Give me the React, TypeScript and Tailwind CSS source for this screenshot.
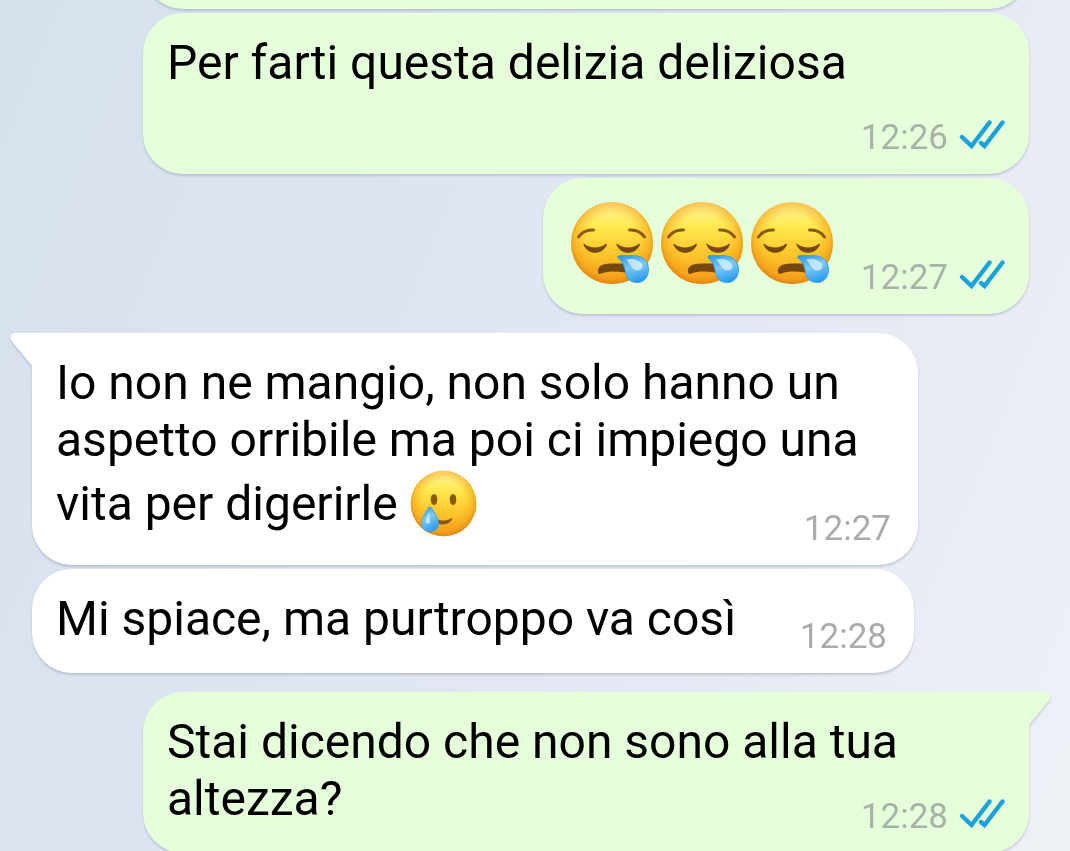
import React from "react";
import clsx from "clsx";

const DoubleCheck: React.FC = () => (
  <svg width="47" height="30" viewBox="0 0 47 30" fill="none" role="img" aria-label="Letto" className="mb-[10px] shrink-0">
    <g stroke="#1ba2de" strokeWidth="4.4" strokeLinecap="round" strokeLinejoin="miter">
      <path d="M4 18l9.500 9L31.500 3.500" />
      <path d="M23 24l3.500 3L44.500 3.500" />
    </g>
  </svg>
);

const FaceGradients: React.FC<{ id: string }> = ({ id }) => (
  <defs>
    <linearGradient id={`${id}-skin`} x1="0" y1="0" x2="0" y2="1">
      <stop offset="0" stopColor="#fff6a0" />
      <stop offset="0.3" stopColor="#ffe94f" />
      <stop offset="0.6" stopColor="#fdc92d" />
      <stop offset="1" stopColor="#f5a01f" />
    </linearGradient>
    <radialGradient id={`${id}-rim`} cx="0.5" cy="0.47" r="0.53">
      <stop offset="0.6" stopColor="#f39a16" stopOpacity="0" />
      <stop offset="0.86" stopColor="#f39a16" stopOpacity="0.5" />
      <stop offset="1" stopColor="#dd8010" stopOpacity="0.9" />
    </radialGradient>
    <linearGradient id={`${id}-drop`} x1="0.2" y1="0" x2="0.6" y2="1">
      <stop offset="0" stopColor="#2f9be4" />
      <stop offset="0.45" stopColor="#7cc9f5" />
      <stop offset="1" stopColor="#2b9bee" />
    </linearGradient>
  </defs>
);

const SleepyFace: React.FC<{ id: string }> = ({ id }) => (
  <svg width="84" height="84" viewBox="0 0 84 84" role="img" aria-label="😪">
    <FaceGradients id={id} />
    <circle cx="42" cy="42" r="41" fill={`url(#${id}-skin)`} />
    <circle cx="42" cy="42" r="41" fill={`url(#${id}-rim)`} />
    <g fill="none" stroke="#8a5a0c" strokeWidth="3" strokeLinecap="round">
      <path d="M8.500 36C12 31 17 28.500 23.500 29" />
      <path d="M59.500 29C66 28.500 71 31 74.500 36" />
    </g>
    <g fill="#75480d">
      <path d="M14.500 43c5 4.500 16 4.500 21 0 1-.8 1.800 0 1.200 1.200-4.500 10-18.500 10-23 0-.6-1.200 0-2 .8-1.200z" />
      <path d="M47.500 43c5 4.500 16 4.500 21 0 1-.8 1.800 0 1.200 1.200-4.500 10-18.500 10-23 0-.6-1.200 0-2 .8-1.200z" />
      <path d="M28.500 72.500C26 66.500 31 62.500 41 62.500h14v9c-9-1.500-17-1.500-23 .7-1.500.8-2.800 1-3.500.3z" />
    </g>
    <path
      d="M48 57C47 55 49 54.500 51 54.500h12c9 0 15.500 5.500 15.500 14 0 7.500-4.500 13-11 13C60 81.500 56.500 77.500 55.500 71 54.500 65 52.500 60 48 57z"
      fill={`url(#${id}-drop)`}
      stroke="#3aa3e8"
      strokeWidth="1"
    />
    <path d="M56 58.500c6-1.500 13 0 16 4.500 1.500 3 0 6-4 6.500-6 .7-6-5.500-12-11z" fill="#d9f1fd" opacity="0.75" />
  </svg>
);

const TearFace: React.FC = () => (
  <svg
    width="67"
    height="67"
    viewBox="0 0 67 67"
    role="img"
    aria-label="🥲"
    className="my-[2px] inline-block align-[-19px]"
  >
    <FaceGradients id="tear" />
    <circle cx="33.500" cy="33.500" r="32.800" fill="url(#tear-skin)" />
    <circle cx="33.500" cy="33.500" r="32.800" fill="url(#tear-rim)" />
    <ellipse cx="24" cy="29.500" rx="3.300" ry="5.500" fill="#8a5a0c" />
    <ellipse cx="43" cy="29.500" rx="3.300" ry="5.500" fill="#8a5a0c" />
    <path d="M26 48.500c5 3 11 2.500 15.500-.2.800-.3 1.200.3.800 1C39 55 31 56 26 52.500z" fill="#8a5a0c" />
    <path
      d="M20 36.500c1.200 0 8.500 11 8.500 17 0 5-3.500 8-8.500 8s-8.500-3-8.500-8c0-6 7.300-17 8.500-17z"
      fill="url(#tear-drop)"
      stroke="#3aa3e8"
      strokeWidth="0.8"
    />
    <path d="M19.500 42c-3 4.500-4 8-3.500 11 2 1.500 4 .5 4-2z" fill="#d9f1fd" opacity="0.75" />
  </svg>
);

// Small pointer on the upper outer corner of the first bubble in a group
const Tail: React.FC<{ outgoing: boolean }> = ({ outgoing }) => (
  <svg
    width="23"
    height="36"
    viewBox="0 0 23 36"
    aria-hidden="true"
    className={clsx("absolute top-0", outgoing ? "left-full -ml-px -scale-x-100 text-[#e5ffdb]" : "right-full -mr-px text-white")}
  >
    <path d="M23 0H5C.5 0-.8 4.500 1.500 8L22 33h1z" fill="currentColor" />
  </svg>
);

interface BubbleProps {
  time: string;
  outgoing?: boolean;
  tail?: boolean;
  children: React.ReactNode;
}

const Bubble: React.FC<BubbleProps> = ({ time, outgoing = false, tail = false, children }) => (
  <article
    className={clsx(
      "relative max-w-[886px] rounded-[40px] px-6 pt-[21px] pb-[26px] text-5xl leading-[57px] text-black drop-shadow-[0_2px_1px_rgba(110,120,150,0.3)]",
      outgoing ? "self-end bg-[#e5ffdb]" : "self-start bg-white",
      tail && (outgoing ? "rounded-tr-none" : "rounded-tl-none")
    )}
  >
    {tail && <Tail outgoing={outgoing} />}
    <div className="flow-root">
      {children}
      {/* keeps the last line clear of the time */}
      <span className={clsx("inline-block h-0", outgoing ? "w-[168px]" : "w-[154px]")} />
    </div>
    <div
      className={clsx(
        "absolute bottom-[15px] flex items-end gap-[10px] text-[35px] leading-[42px]",
        outgoing ? "right-6 text-[#a8b3a8]" : "right-[27px] text-[#a9abad]"
      )}
    >
      <time>{time}</time>
      {outgoing && <DoubleCheck />}
    </div>
  </article>
);

export default function App() {
  return (
    <main className="flex h-screen flex-col gap-[19px] overflow-hidden bg-linear-[112deg,#d6e1ec_0%,#dce4f1_30%,#e4e8f3_62%,#eef1f6_100%] pr-[41px] pl-8 font-['Roboto',sans-serif]">
      <section className="flex shrink-0 flex-col gap-1">
        <div className="-mt-[87px] h-24 w-full max-w-[886px] self-end rounded-[40px] bg-[#e5ffdb] drop-shadow-[0_2px_1px_rgba(110,120,150,0.3)]" />
        <Bubble time="12:26" outgoing>
          Per farti questa delizia deliziosa
        </Bubble>
        <Bubble time="12:27" outgoing>
          <span className="inline-flex h-[89px] items-center gap-[6px] px-[3px] pb-[2px] align-top">
            <SleepyFace id="sleepy-1" />
            <SleepyFace id="sleepy-2" />
            <SleepyFace id="sleepy-3" />
          </span>
        </Bubble>
      </section>
      <section className="flex shrink-0 flex-col gap-1">
        <Bubble time="12:27" tail>
          Io non ne mangio, non solo hanno un aspetto orribile ma poi ci impiego una vita per digerirle <TearFace />
        </Bubble>
        <Bubble time="12:28">Mi spiace, ma purtroppo va così</Bubble>
      </section>
      <section className="flex shrink-0 flex-col gap-1">
        <Bubble time="12:28" outgoing tail>
          Stai dicendo che non sono alla tua altezza?
        </Bubble>
      </section>
    </main>
  );
}
